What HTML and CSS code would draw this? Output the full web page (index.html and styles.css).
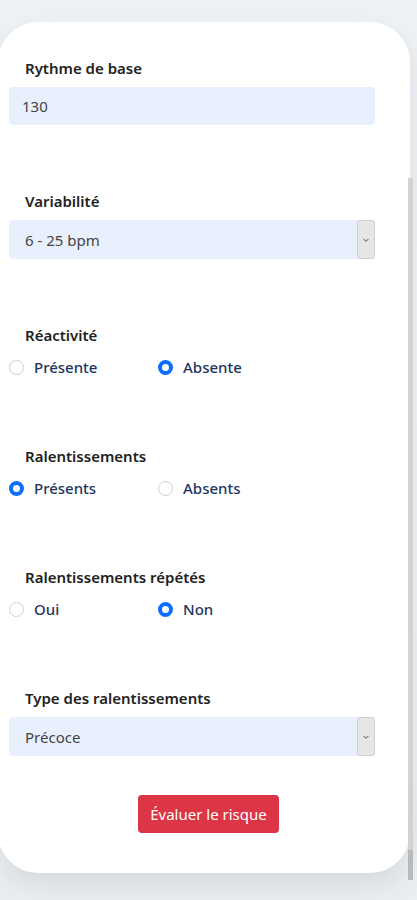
FILE: index.html
```html
<!DOCTYPE html>
<html lang="fr">
<head>
    <meta charset="UTF-8">
    <meta name="viewport" content="width=device-width, initial-scale=1.0">
    <title>Évaluation du rythme</title>
    <link rel="stylesheet" href="styles.css">
</head>
<body>

    <form class="card" id="riskForm">
        <div class="group">
            <label class="field-label" for="rythme">Rythme de base</label>
            <input class="field input-text" type="text" id="rythme" value="130">
        </div>

        <div class="group">
            <label class="field-label" for="variabilite">Variabilité</label>
            <div class="select-box">
                <select class="field" id="variabilite">
                    <option>6 - 25 bpm</option>
                    <option>&lt; 5 bpm</option>
                    <option>&gt; 25 bpm</option>
                </select>
                <span class="arrow">
                    <svg width="8" height="6" viewBox="0 0 8 6"><path d="M1.5 2 L4 4.2 L6.5 2" fill="none" stroke="#8a8a8a" stroke-width="1.2"/></svg>
                </span>
            </div>
        </div>

        <div class="group">
            <span class="field-label">Réactivité</span>
            <div class="radios">
                <label class="radio"><input type="radio" name="reac"> Présente</label>
                <label class="radio"><input type="radio" name="reac" checked> Absente</label>
            </div>
        </div>

        <div class="group">
            <span class="field-label">Ralentissements</span>
            <div class="radios">
                <label class="radio"><input type="radio" name="ral" checked> Présents</label>
                <label class="radio"><input type="radio" name="ral"> Absents</label>
            </div>
        </div>

        <div class="group">
            <span class="field-label">Ralentissements répétés</span>
            <div class="radios">
                <label class="radio"><input type="radio" name="rep"> Oui</label>
                <label class="radio"><input type="radio" name="rep" checked> Non</label>
            </div>
        </div>

        <div class="group last">
            <label class="field-label" for="type">Type des ralentissements</label>
            <div class="select-box">
                <select class="field" id="type">
                    <option>Précoce</option>
                    <option>Tardif</option>
                    <option>Variable</option>
                </select>
                <span class="arrow">
                    <svg width="8" height="6" viewBox="0 0 8 6"><path d="M1.5 2 L4 4.2 L6.5 2" fill="none" stroke="#8a8a8a" stroke-width="1.2"/></svg>
                </span>
            </div>
        </div>

        <div class="actions">
            <button type="submit" class="btn-risk">Évaluer le risque</button>
        </div>
    </form>

    <div class="scrollbar"><div class="thumb"></div></div>

</body>
</html>
```

FILE: styles.css
```css
    body {
        font-family: "Noto Sans", "Open Sans", Arial, sans-serif;
        background: linear-gradient(#eef2f5, #f3f5f7 40%, #eceff2);
        margin: 0;
        padding: 22px 0 0 0;
        height: 878px;
        overflow: hidden;
        position: relative;
    }

    .card {
        background-color: #fff;
        margin-left: -2px;
        width: 412px;
        height: 851px;
        box-sizing: border-box;
        padding: 36px 35px 0 11px;
        border-radius: 40px;
        box-shadow: 0 12px 30px rgba(40, 60, 80, 0.12);
    }

    .group {
        margin-bottom: 66px;
    }

    .group.last {
        margin-bottom: 39px;
    }

    .field-label {
        display: block;
        padding-left: 16px;
        margin-bottom: 9px;
        font-size: 15px;
        line-height: 20px;
        font-weight: 600;
        color: #222;
    }

    .field {
        width: 100%;
        box-sizing: border-box;
        height: 38px;
        padding: 0 16px;
        border: none;
        border-radius: 4px;
        background-color: #e8f0fe;
        color: #444;
        font-family: inherit;
        font-size: 15px;
        outline: none;
    }

    .input-text {
        padding-left: 13px;
    }

    .select-box {
        display: flex;
        height: 39px;
        background-color: #e8f0fe;
        border-radius: 4px;
    }

    .select-box select {
        flex: 1;
        height: 39px;
        appearance: none;
        -webkit-appearance: none;
        background: transparent;
    }

    .arrow {
        width: 18px;
        box-sizing: border-box;
        border: 1px solid #cfcfcf;
        border-radius: 3px;
        background-color: #e6e6e6;
        display: flex;
        align-items: center;
        justify-content: center;
    }

    .radios {
        display: flex;
        height: 26px;
    }

    .radio {
        display: flex;
        align-items: center;
        width: 149px;
        font-size: 15px;
        font-weight: 500;
        line-height: 20px;
        color: #1e3561;
    }

    .radio input {
        appearance: none;
        -webkit-appearance: none;
        width: 15px;
        height: 15px;
        margin: 0 10px 0 0;
        border: 1px solid #d0d0d0;
        border-radius: 50%;
        background-color: #fff;
    }

    .radio input:checked {
        border: 4.5px solid #0d6efd;
    }

    .actions {
        display: flex;
        justify-content: center;
        padding-left: 33px;
    }

    .btn-risk {
        height: 38px;
        padding: 0 12px;
        background-color: #dc3545;
        color: #fff;
        border: none;
        border-radius: 4px;
        font-family: inherit;
        font-size: 15px;
        cursor: pointer;
    }

    .scrollbar {
        position: absolute;
        top: 178px;
        right: 4px;
        width: 5px;
        height: 702px;
        background-color: #d3d3d3;
    }

    .thumb {
        margin-top: 672px;
        height: 30px;
        background-color: #b9b9b9;
    }
```
